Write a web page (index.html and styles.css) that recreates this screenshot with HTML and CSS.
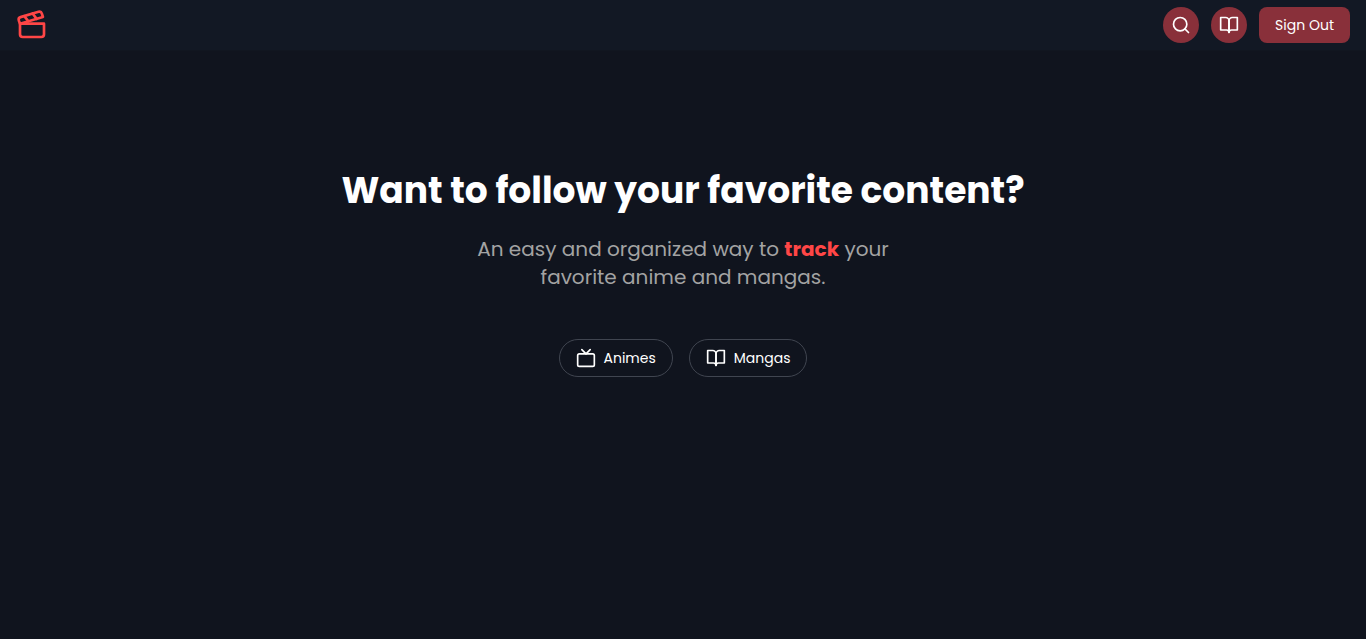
FILE: index.html
```html
<!DOCTYPE html>
<html lang="en">
<head>
<meta charset="utf-8">
<meta name="viewport" content="width=device-width, initial-scale=1">
<title>Anime and manga tracker</title>
<link rel="stylesheet" href="styles.css">
</head>
<body>
<header class="navbar">
  <a class="brand" href="#" aria-label="Home">
    <svg class="brand-icon" viewBox="0 0 24 24" aria-hidden="true"><path d="M20.2 6 3 11l-.9-2.4c-.3-1.1.3-2.2 1.3-2.5l13.5-4c1.1-.3 2.2.3 2.5 1.3Z"/><path d="m6.2 5.3 3.1 3.9"/><path d="m12.4 3.4 3.1 4"/><path d="M3 11h18v8a2 2 0 0 1-2 2H5a2 2 0 0 1-2-2Z"/></svg>
  </a>
  <nav class="actions">
    <button class="round-button" type="button" aria-label="Search">
      <svg class="icon" viewBox="0 0 24 24" aria-hidden="true"><circle cx="11" cy="11" r="8"/><path d="m21 21-4.3-4.3"/></svg>
    </button>
    <button class="round-button" type="button" aria-label="Library">
      <svg class="icon" viewBox="0 0 24 24" aria-hidden="true"><path d="M2 3h6a4 4 0 0 1 4 4v14a3 3 0 0 0-3-3H2z"/><path d="M22 3h-6a4 4 0 0 0-4 4v14a3 3 0 0 1 3-3h7z"/></svg>
    </button>
    <button class="sign-out" type="button">Sign Out</button>
  </nav>
</header>
<main class="hero">
  <h1 class="title">Want to follow your favorite content?</h1>
  <p class="subtitle">An easy and organized way to <strong class="accent">track</strong> your favorite anime and mangas.</p>
  <div class="links">
    <a class="pill" href="#">
      <svg class="icon" viewBox="0 0 24 24" aria-hidden="true"><rect width="20" height="15" x="2" y="7" rx="2"/><path d="m17 2-5 5-5-5"/></svg>
      Animes
    </a>
    <a class="pill" href="#">
      <svg class="icon" viewBox="0 0 24 24" aria-hidden="true"><path d="M2 3h6a4 4 0 0 1 4 4v14a3 3 0 0 0-3-3H2z"/><path d="M22 3h-6a4 4 0 0 0-4 4v14a3 3 0 0 1 3-3h7z"/></svg>
      Mangas
    </a>
  </div>
</main>
</body>
</html>
```
FILE: styles.css
```css
* { box-sizing: border-box; }
body {
  margin: 0;
  min-height: 100vh;
  background: #10141e;
  color: #fff;
  font-family: Poppins, Inter, "Open Sans", sans-serif;
}
.navbar {
  display: flex;
  align-items: center;
  justify-content: space-between;
  padding: 7px 16px;
  border-bottom: 1px solid #111620;
  background: #121824;
}
.brand { display: flex; }
.brand-icon {
  width: 32px;
  height: 32px;
  fill: none;
  stroke: #ff4646;
  stroke-width: 2;
  stroke-linecap: round;
  stroke-linejoin: round;
}
.actions { display: flex; gap: 12px; }
.icon {
  width: 20px;
  height: 20px;
  fill: none;
  stroke: currentColor;
  stroke-width: 2;
  stroke-linecap: round;
  stroke-linejoin: round;
}
.round-button,
.sign-out {
  display: flex;
  align-items: center;
  justify-content: center;
  height: 36px;
  border: 0;
  background: #89303a;
  color: #fff;
  font: inherit;
  font-size: 14px;
  cursor: pointer;
}
.round-button { width: 36px; padding: 0; border-radius: 50%; }
.sign-out { padding: 0 16px; border-radius: 8px; }
.hero {
  display: flex;
  flex-direction: column;
  align-items: center;
  padding: 120px 16px 40px;
  text-align: center;
}
.title {
  margin: 0;
  font-size: 36px;
  font-weight: 700;
  line-height: 40px;
}
.subtitle {
  max-width: 448px;
  margin: 24px 0 0;
  color: #a3a3a3;
  font-size: 20px;
  line-height: 28px;
}
.accent { color: #ff4646; font-weight: 700; }
.links { display: flex; gap: 16px; margin-top: 48px; }
.pill {
  display: flex;
  align-items: center;
  gap: 8px;
  height: 38px;
  padding: 0 16px;
  border: 1px solid #404550;
  border-radius: 19px;
  color: #fff;
  font-size: 14px;
  text-decoration: none;
}
```
